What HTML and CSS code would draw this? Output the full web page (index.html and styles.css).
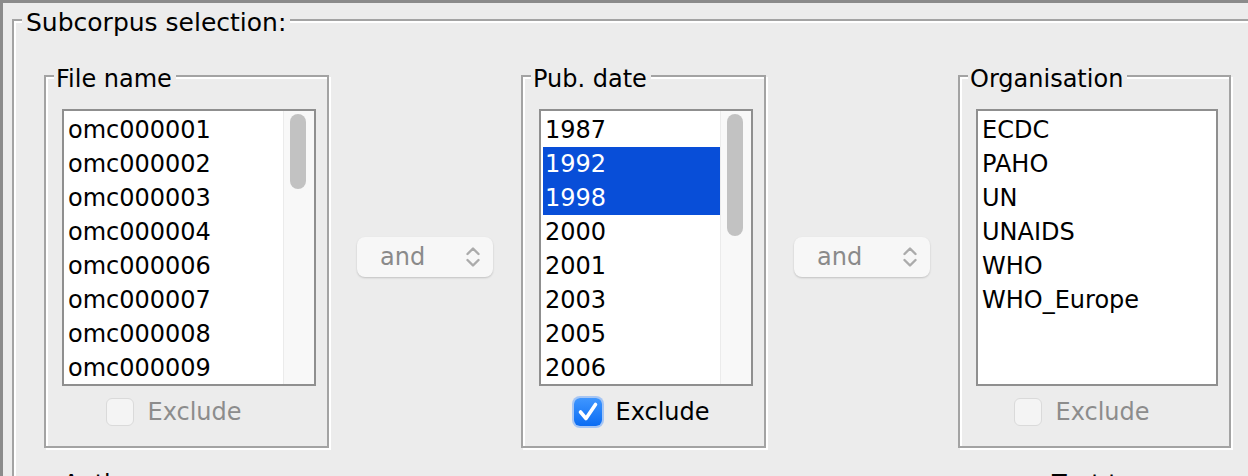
FILE: index.html
```html
<!DOCTYPE html>
<html lang="en">
<head>
  <meta charset="UTF-8">
  <meta name="viewport" content="width=device-width, initial-scale=1.0">
  <title>Subcorpus selection</title>
  <link rel="stylesheet" href="styles.css">
</head>
<body>
  <div class="window">
    <fieldset class="subcorpus">
      <legend>Subcorpus selection:</legend>

      <div class="row">
        <fieldset class="group group-file">
          <legend>File name</legend>
          <div class="list">
            <ul class="items">
              <li>omc000001</li>
              <li>omc000002</li>
              <li>omc000003</li>
              <li>omc000004</li>
              <li>omc000006</li>
              <li>omc000007</li>
              <li>omc000008</li>
              <li>omc000009</li>
            </ul>
            <div class="track"><div class="thumb" style="height: 75px"></div></div>
          </div>
          <label class="check off"><span class="box"></span>Exclude</label>
        </fieldset>

        <div class="combo">
          <span>and</span>
          <svg width="14" height="22" viewBox="0 0 14 22"><path d="M1.5 8 L7 2.5 L12.5 8 M1.5 14 L7 19.5 L12.5 14" fill="none" stroke="#ababab" stroke-width="2.4" stroke-linecap="round" stroke-linejoin="round"/></svg>
        </div>

        <fieldset class="group group-date">
          <legend>Pub. date</legend>
          <div class="list">
            <ul class="items">
              <li>1987</li>
              <li class="sel">1992</li>
              <li class="sel">1998</li>
              <li>2000</li>
              <li>2001</li>
              <li>2003</li>
              <li>2005</li>
              <li>2006</li>
            </ul>
            <div class="track"><div class="thumb" style="height: 122px"></div></div>
          </div>
          <label class="check on">
            <span class="box"><svg width="28" height="28" viewBox="0 0 28 28"><path d="M6.5 14 L12 20.5 L21.5 6.5" fill="none" stroke="#fff" stroke-width="3.6" stroke-linecap="round" stroke-linejoin="round"/></svg></span>Exclude
          </label>
        </fieldset>

        <div class="combo">
          <span>and</span>
          <svg width="14" height="22" viewBox="0 0 14 22"><path d="M1.5 8 L7 2.5 L12.5 8 M1.5 14 L7 19.5 L12.5 14" fill="none" stroke="#ababab" stroke-width="2.4" stroke-linecap="round" stroke-linejoin="round"/></svg>
        </div>

        <fieldset class="group group-org">
          <legend>Organisation</legend>
          <div class="list">
            <ul class="items">
              <li>ECDC</li>
              <li>PAHO</li>
              <li>UN</li>
              <li>UNAIDS</li>
              <li>WHO</li>
              <li>WHO_Europe</li>
            </ul>
          </div>
          <label class="check off"><span class="box"></span>Exclude</label>
        </fieldset>
      </div>

      <div class="row-second">
        <fieldset class="group group-author">
          <legend>Author</legend>
        </fieldset>
        <fieldset class="group group-type">
          <legend>Text type</legend>
        </fieldset>
      </div>
    </fieldset>
  </div>
</body>
</html>
```

FILE: styles.css
```css
body {
  margin: 0;
  background-color: #ececec;
  font-family: "DejaVu Sans", Verdana, sans-serif;
  color: #000;
  overflow: hidden;
}
.window {
  height: 100vh;
  box-sizing: border-box;
  padding-top: 1px;
  border-top: 3px solid #8b8b8b;
  border-left: 3px solid #8b8b8b;
}
.subcorpus {
  margin: 0 -20px 0 9px;
  padding: 0 0 0 8px;
  min-width: 0;
  border: 2px solid #a3a3a3;
  box-shadow: inset 2px 2px 0 #fff, 2px 2px 0 #fff;
}
.subcorpus > legend {
  font-size: 25px;
  line-height: 26px;
  padding: 6px 4px 0;
  background-color: #ececec;
}
.row {
  display: flex;
  align-items: center;
  gap: 28px;
  padding: 25px 0 0 22px;
}
.group {
  margin: 0;
  padding: 18px 11px 20px 8px;
  min-width: 0;
  box-sizing: border-box;
  border: 2px solid #a3a3a3;
  box-shadow: inset 2px 2px 0 #fff, 2px 2px 0 #fff;
}
.group > legend {
  font-size: 24px;
  line-height: 24px;
  padding: 6px 4px 0 2px;
  background-color: #ececec;
}
.group-file {
  width: 285px;
}
.group-date {
  width: 245px;
}
.group-org {
  width: 273px;
}
.list {
  display: flex;
  height: 277px;
  margin-left: 8px;
  box-sizing: border-box;
  border: 2px solid #8f8f8f;
  background-color: #fff;
}
.items {
  flex: 1;
  list-style: none;
  margin: 0;
  padding: 2px 0 0 2px;
  overflow: hidden;
}
.items li {
  height: 34px;
  line-height: 34px;
  padding-left: 2px;
  font-size: 24px;
  white-space: nowrap;
}
.items li.sel {
  background-color: #084ed8;
  color: #fff;
}
.track {
  flex: none;
  width: 31px;
  box-sizing: border-box;
  padding-top: 3px;
  background-color: #f8f8f8;
  border-left: 1px solid #ebebeb;
}
.thumb {
  width: 16px;
  margin-left: 6px;
  border-radius: 8px;
  background-color: #c2c2c2;
}
.check {
  display: flex;
  align-items: center;
  justify-content: center;
  gap: 13px;
  height: 28px;
  margin-top: 12px;
  font-size: 24px;
  color: #8c8c8c;
}
.check.off {
  padding-right: 22px;
}
.box {
  display: block;
  width: 28px;
  height: 28px;
  box-sizing: border-box;
  border: 1px solid #dadada;
  border-radius: 6px;
  background-color: #f4f4f4;
}
.check.on {
  color: #000;
}
.check.on .box {
  border: none;
  background: linear-gradient(#3f96ff, #0b6cf3);
  box-shadow: 0 0 0 2px rgba(80, 150, 255, 0.45);
}
.check.on .box svg {
  display: block;
}
.combo {
  flex: none;
  display: flex;
  align-items: center;
  justify-content: space-between;
  width: 136px;
  height: 40px;
  margin-top: 4px;
  box-sizing: border-box;
  padding: 0 13px 0 23px;
  border-radius: 8px;
  background-color: #f7f7f7;
  box-shadow: 0 1px 2px rgba(0, 0, 0, 0.18);
  font-size: 24px;
  color: #8a8a8a;
}
.row-second {
  display: grid;
  grid-template-columns: 285px 1fr 220px;
  padding: 18px 6px 0 29px;
}
.row-second .group {
  height: 200px;
}
.group-type {
  grid-column: 3;
}
```
